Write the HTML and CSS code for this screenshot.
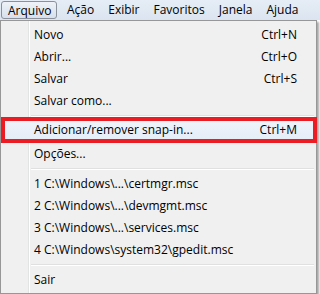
FILE: index.html
```html
<!DOCTYPE html>
<html lang="pt">
<head>
<meta charset="utf-8">
<link rel="stylesheet" href="styles.css">
</head>
<body>
<div class="menubar">
  <span class="top active">Arquivo</span>
  <span class="top">Ação</span>
  <span class="top">Exibir</span>
  <span class="top">Favoritos</span>
  <span class="top">Janela</span>
  <span class="top">Ajuda</span>
</div>
<div class="dropwrap">
  <div class="menu">
    <div class="item"><span>Novo</span><span class="key">Ctrl+N</span></div>
    <div class="item"><span>Abrir...</span><span class="key">Ctrl+O</span></div>
    <div class="item"><span>Salvar</span><span class="key">Ctrl+S</span></div>
    <div class="item"><span>Salvar como...</span></div>
    <div class="sep first"></div>
    <div class="item hot"><span>Adicionar/remover snap-in...</span><span class="key">Ctrl+M</span></div>
    <div class="item"><span>Opções...</span></div>
    <div class="sep"></div>
    <div class="item"><span>1 C:\Windows\...\certmgr.msc</span></div>
    <div class="item"><span>2 C:\Windows\...\devmgmt.msc</span></div>
    <div class="item"><span>3 C:\Windows\...\services.msc</span></div>
    <div class="item"><span>4 C:\Windows\system32\gpedit.msc</span></div>
    <div class="sep"></div>
    <div class="item"><span>Sair</span></div>
  </div>
</div>
</body>
</html>
```
FILE: styles.css
```css
html, body {
  margin: 0;
  padding: 0;
  background: #ffffff;
  width: 320px;
  height: 294px;
  overflow: hidden;
  font-family: "Open Sans", "Noto Sans", sans-serif;
  font-size: 12px;
  color: #000;
}
.menubar {
  height: 20px;
  display: flex;
  align-items: center;
  background: linear-gradient(#e6edf6, #dbe4f0);
  padding-left: 1px;
}
.top {
  height: 18px;
  line-height: 17px;
  padding: 0 7px 0 6px;
  margin-right: 1px;
  box-sizing: border-box;
}
.top.active {
  border: 1px solid #8a919b;
  border-radius: 3px;
  background: linear-gradient(#eef2f8, #d6e0ec);
  padding: 0 6px;
  width: 56px;
  margin-right: 4px;
}
.dropwrap {
  width: 320px;
  height: 274px;
}
.menu {
  width: 317px;
  box-sizing: border-box;
  border: 1px solid #979797;
  background: linear-gradient(90deg, #f0f0f0 0, #f0f0f0 27px, #e2e3e3 27px, #e2e3e3 28px, #ffffff 28px, #ffffff 29px, #f0f0f0 29px);
  padding: 3px 2px 2px 2px;
  box-shadow: 2px 2px 2px rgba(0,0,0,0.35);
}
.item {
  height: 22px;
  display: flex;
  align-items: center;
  justify-content: space-between;
  padding-left: 31px;
  padding-right: 17px;
  line-height: 22px;
}
.key {
  text-align: right;
}
.hot {
  background: linear-gradient(#f1f5fb, #e3ecf7);
  outline: 4px solid #ec1c24;
  outline-offset: -3px;
  margin: 0 -2px 1px -1px;
  padding-left: 32px;
  padding-right: 19px;
  height: 24px;
}
.sep {
  height: 8px;
  margin-left: 28px;
  background: linear-gradient(#f0f0f0 0, #f0f0f0 3px, #e0e0e0 3px, #e0e0e0 4px, #ffffff 4px, #ffffff 5px, #f0f0f0 5px);
}
.sep.first {
  height: 6px;
}
```
